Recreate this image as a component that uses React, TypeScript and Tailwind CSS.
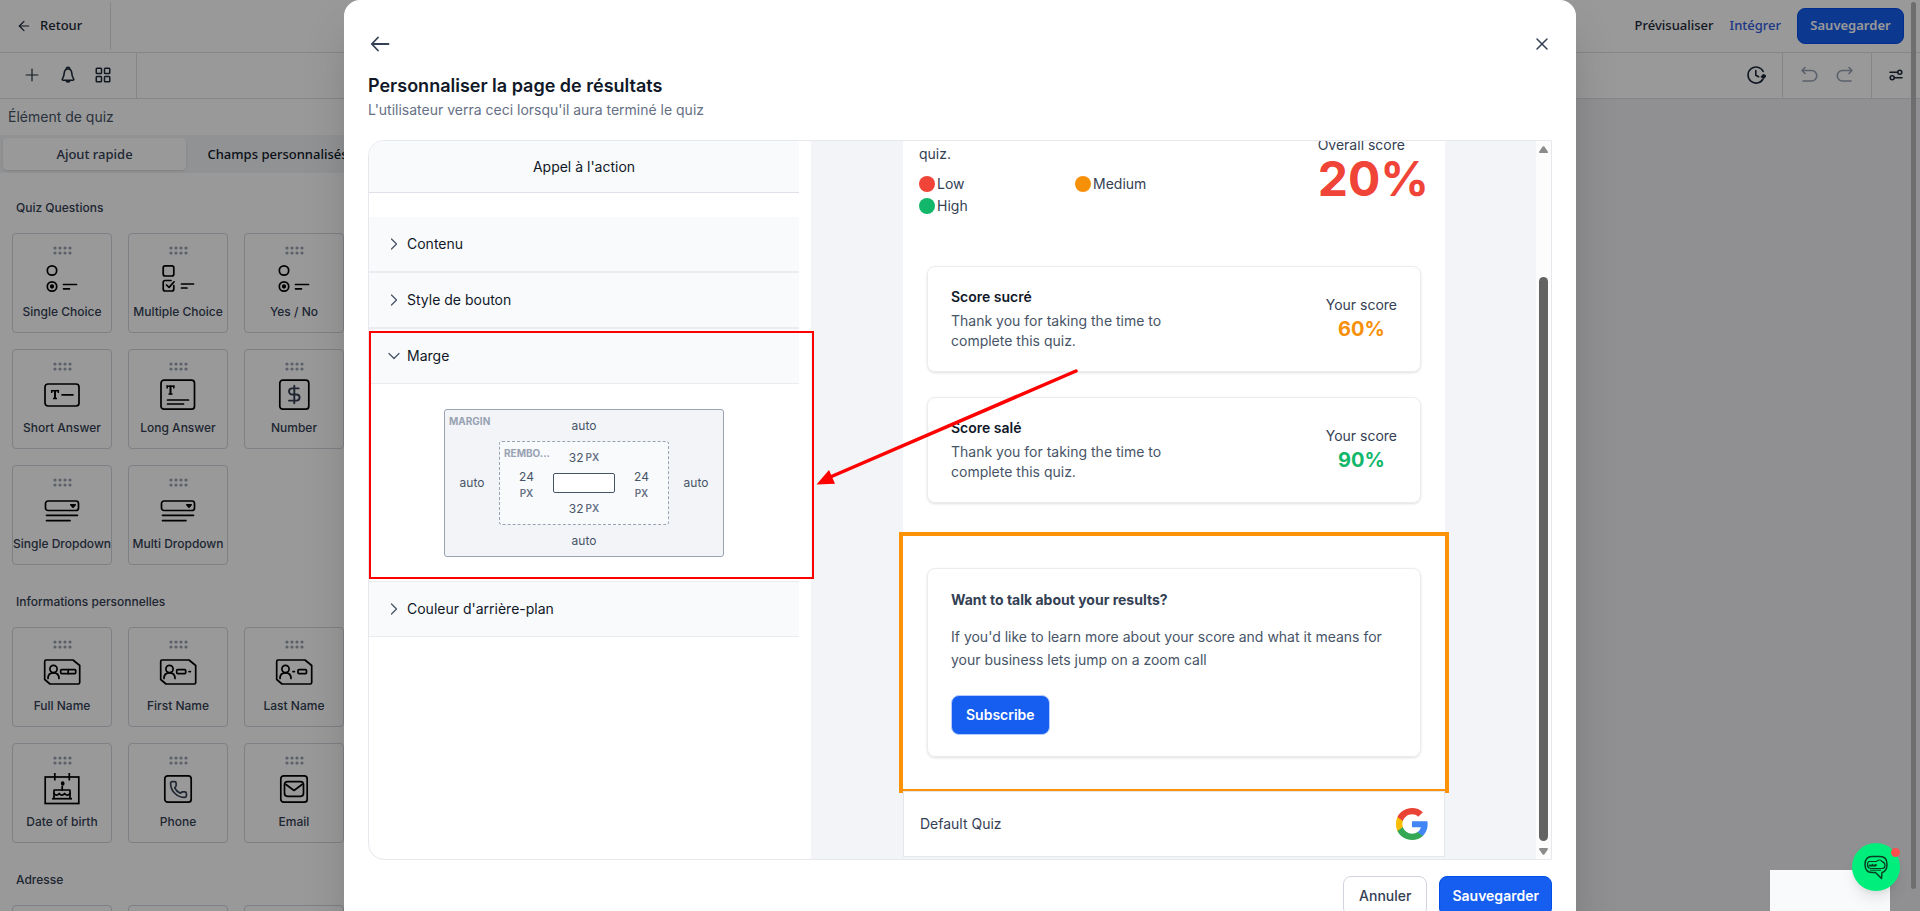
import React from "react";
import { ArrowLeft, ChevronDown, ChevronRight, DollarSign, LayoutGrid, Phone, Plus, X } from "lucide-react";

type Tile = { label: string; icon: React.ReactNode };

function Glyph({ children }: { children: React.ReactNode }) {
  return (
    <svg
      viewBox="0 0 40 36"
      className="mt-[7px] h-9 w-10 shrink-0"
      fill="none"
      stroke="#000"
      strokeWidth="1.7"
      strokeLinecap="round"
      strokeLinejoin="round"
      aria-hidden="true"
    >
      {children}
    </svg>
  );
}

function SlabT({ x, y }: { x: number; y: number }) {
  return (
    <g strokeWidth="1.5" strokeLinecap="butt">
      <line x1={x} y1={y + 0.7} x2={x + 8} y2={y + 0.7} />
      <line x1={x + 0.7} y1={y} x2={x + 0.7} y2={y + 3} />
      <line x1={x + 7.3} y1={y} x2={x + 7.3} y2={y + 3} />
      <line x1={x + 4} y1={y} x2={x + 4} y2={y + 9} strokeWidth="2" />
      <line x1={x + 2} y1={y + 8.5} x2={x + 6} y2={y + 8.5} />
    </g>
  );
}

const radioIcon = (
  <Glyph>
    <circle cx="10" cy="8.5" r="4.7" />
    <circle cx="10" cy="24.5" r="4.7" />
    <circle cx="10" cy="24.5" r="1.3" fill="#000" />
    <path d="M21.5 22.5H34.5M21.5 26.8H27.5" />
  </Glyph>
);

const dropdownIcon = (
  <Glyph>
    <rect x="3.5" y="7" width="33" height="9.5" rx="2.5" />
    <path d="M28.8 10.8l2.2 2.4 2.2-2.4z" fill="#000" />
    <path d="M4.5 21.3H35.5M4.5 26.6H28" />
  </Glyph>
);

function IdCard({ children }: { children: React.ReactNode }) {
  return (
    <Glyph>
      <path d="M4 4H31L37.7 9.5V26.5Q37.7 28 36.2 28H8L2.7 23.5V5.5Q2.7 4 4 4Z" />
      <circle cx="11.5" cy="13" r="3.6" />
      <path d="M6 22.5c0-3.8 2-5.6 5.5-5.6s5.5 1.8 5.5 5.6" />
      {children}
    </Glyph>
  );
}

const questionTiles: Tile[] = [
  { label: "Single Choice", icon: radioIcon },
  {
    label: "Multiple Choice",
    icon: (
      <Glyph>
        <rect x="5.2" y="3.8" width="10.6" height="10.2" rx="2" />
        <path d="M15.8 23.5V27q0 2-2 2H7.2q-2 0-2-2V20.5q0-2 2-2H13" />
        <path d="M8.5 23l2.6 2.4 5-5.6" />
        <path d="M23.5 22H35.5M23.5 26H29" />
      </Glyph>
    ),
  },
  { label: "Yes / No", icon: radioIcon },
  {
    label: "Short Answer",
    icon: (
      <Glyph>
        <rect x="3" y="6" width="34" height="22" rx="3" />
        <SlabT x={9} y={12} />
        <path d="M20 16.8H31" />
      </Glyph>
    ),
  },
  {
    label: "Long Answer",
    icon: (
      <Glyph>
        <rect x="3" y="2.2" width="33.5" height="29" rx="3" />
        <SlabT x={8.5} y={7.5} />
        <path d="M9.5 22H30.5M9.5 26H25.5" />
      </Glyph>
    ),
  },
  {
    label: "Number",
    icon: (
      <Glyph>
        <rect x="5.8" y="2.2" width="29" height="29" rx="3" />
        <DollarSign x="9.8" y="6" width="21" height="21" strokeWidth="2.2" />
      </Glyph>
    ),
  },
  { label: "Single Dropdown", icon: dropdownIcon },
  { label: "Multi Dropdown", icon: dropdownIcon },
];

const personalTiles: Tile[] = [
  {
    label: "Full Name",
    icon: (
      <IdCard>
        <rect x="18.7" y="13.6" width="15" height="4" rx="1" />
        <path d="M26.2 13.6v4" />
      </IdCard>
    ),
  },
  {
    label: "First Name",
    icon: (
      <IdCard>
        <rect x="18.7" y="13.6" width="9" height="4" rx="1" />
        <path d="M31 15.6h1.4" />
      </IdCard>
    ),
  },
  {
    label: "Last Name",
    icon: (
      <IdCard>
        <path d="M19 15.6h1.4" />
        <rect x="24" y="13.6" width="8.5" height="4" rx="1" />
      </IdCard>
    ),
  },
  {
    label: "Date of birth",
    icon: (
      <Glyph>
        <g strokeLinejoin="miter" strokeLinecap="butt">
          <rect x="3.2" y="5" width="33.6" height="26.5" />
          <path d="M12.8 1v7.5M27.3 1v7.5" />
          <path d="M10 26.7H30" />
        </g>
        <path d="M12 26.5V18.5Q12 18 12.5 18H27.5Q28 18 28 18.5V26.5" />
        <path d="M12 21.5q2.6 3.2 5.2 0q2.7 3.2 5.4 0q2.7 3.2 5.4 0" />
        <path d="M20.2 14.5V18" />
        <ellipse cx="20.7" cy="11.6" rx="1" ry="1.4" fill="#000" />
      </Glyph>
    ),
  },
  {
    label: "Phone",
    icon: (
      <Glyph>
        <rect x="6.8" y="3.8" width="26.4" height="26.4" rx="3" />
        <Phone x="11" y="8" width="19" height="19" strokeWidth="2.1" />
      </Glyph>
    ),
  },
  {
    label: "Email",
    icon: (
      <Glyph>
        <rect x="6.8" y="3.8" width="26.4" height="26.4" rx="3" />
        <rect x="10.5" y="9.7" width="19" height="14.6" rx="3" />
        <path d="M12 12.5l8 6 8-6" />
      </Glyph>
    ),
  },
];

function DragDots() {
  return (
    <svg viewBox="0 0 19 9" className="h-[9px] w-[19px] shrink-0" fill="#98a0b0" aria-hidden="true">
      {[2, 7, 12, 17].map((x) => (
        <g key={x}>
          <circle cx={x} cy="2" r="1.6" />
          <circle cx={x} cy="7" r="1.6" />
        </g>
      ))}
    </svg>
  );
}

function TileSection({ title, tiles }: { title: string; tiles: Tile[] }) {
  return (
    <section className="flex flex-col gap-4">
      <h3 className="pl-1 text-xs leading-[18px] font-medium text-[#344054]">{title}</h3>
      <div className="grid grid-cols-[100px_100px_100px] gap-4">
        {tiles.map((t, i) => (
          <button
            key={i}
            className="flex h-[100px] flex-col items-center rounded border border-[#d0d5dd] pt-3 text-xs leading-[18px] font-medium whitespace-nowrap text-[#344054]"
          >
            <DragDots />
            {t.icon}
            <span className="mt-[5px]">{t.label}</span>
          </button>
        ))}
      </div>
    </section>
  );
}

function Sidebar() {
  return (
    <aside className="w-[372px] shrink-0 bg-white">
      <h2 className="px-2 py-[7px] text-sm leading-[22px] text-[#475467]">Élément de quiz</h2>
      <div className="grid grid-cols-2 bg-[#f2f4f7] p-[3px] font-['Noto_Sans',sans-serif] text-[13px] font-medium">
        <button className="h-8 rounded bg-white pt-0.5 text-[#344054] shadow-sm">Ajout rapide</button>
        <button className="h-8 pt-0.5 text-[#101828]">Champs personnalisés</button>
      </div>
      <div className="flex flex-col gap-7 px-3 pt-[26px]">
        <TileSection title="Quiz Questions" tiles={questionTiles} />
        <TileSection title="Informations personnelles" tiles={personalTiles} />
        <TileSection
          title="Adresse"
          tiles={[
            { label: "", icon: null },
            { label: "", icon: null },
            { label: "", icon: null },
          ]}
        />
      </div>
    </aside>
  );
}

function TopBars() {
  return (
    <header className="text-[#1d2939]">
      <div className="flex h-[53px] items-center border-b border-[#dcdfe5] font-['Noto_Sans',sans-serif] text-[13px] font-medium">
        <button className="flex h-12 w-[111px] items-center gap-2 border-r border-[#dcdfe5] pl-4">
          <ArrowLeft className="size-4" strokeWidth={1.8} />
          Retour
        </button>
        <nav className="ml-auto flex items-center gap-4 pr-4">
          <a href="#preview">Prévisualiser</a>
          <a href="#embed" className="text-[#2f5be0]">Intégrer</a>
          <button className="h-9 w-[107px] rounded-lg border border-[#004eeb] bg-[#155eef] font-semibold text-white">
            Sauvegarder
          </button>
        </nav>
      </div>
      <div className="flex h-[46px] items-stretch border-b border-[#dcdfe5] pb-0.5">
        <div className="-mb-0.5 flex w-[137px] items-center gap-4 border-r border-[#dcdfe5] pb-0.5 pl-[22px]">
          <button aria-label="Ajouter">
            <Plus className="size-5" strokeWidth={1.4} absoluteStrokeWidth />
          </button>
          <button aria-label="Notifications">
            <svg viewBox="0 0 20 20" className="size-5" fill="none" stroke="currentColor" strokeWidth="1.6" strokeLinejoin="round" aria-hidden="true">
              <path d="M8.300 4.300C8.300 2.900 9 2.300 10 2.300s1.700.6 1.700 2" />
              <path d="M10 4c-2.400 0-3.600 1.800-3.800 4.200-.2 2.800-.7 4-1.700 5.400-.6.9-.2 1.600.8 1.600h9.400c1 0 1.400-.7.8-1.600-1-1.400-1.500-2.600-1.700-5.400C13.600 5.800 12.400 4 10 4z" />
              <path d="M8.200 15.200c0 1.200.7 1.700 1.800 1.700s1.800-.5 1.800-1.700" />
            </svg>
          </button>
          <button aria-label="Widgets">
            <LayoutGrid className="size-[18px]" strokeWidth={2} />
          </button>
        </div>
        <div className="-mb-0.5 ml-auto flex items-stretch">
          <button aria-label="Historique" className="px-4 pb-0.5">
            <svg viewBox="0 0 20 20" className="size-5" fill="none" stroke="currentColor" strokeWidth="1.6" strokeLinecap="round" strokeLinejoin="round" aria-hidden="true">
              <path d="M17.200 6.500A8 8 0 1 0 17 14" />
              <path d="M9.800 5.500V10.200l2.800 1.600" />
              <path d="M15.500 11.800l2-2 2 1.200-1.700 2z" fill="currentColor" />
            </svg>
          </button>
          <div className="flex items-center gap-4 border-x border-[#dcdfe5] px-4 pb-0.5 text-[#98a2b3]">
            <button aria-label="Annuler la modification">
              <svg viewBox="0 0 20 20" className="size-5" fill="none" stroke="currentColor" strokeWidth="1.6" strokeLinecap="round" strokeLinejoin="round" aria-hidden="true">
                <path d="M6 2.500L3 5.500l3 3M3 5.500h9.500a5.200 5.200 0 0 1 0 10.500H4" />
              </svg>
            </button>
            <button aria-label="Rétablir la modification">
              <svg viewBox="0 0 20 20" className="size-5" fill="none" stroke="currentColor" strokeWidth="1.6" strokeLinecap="round" strokeLinejoin="round" aria-hidden="true">
                <path d="M14 2.500l3 3-3 3M17 5.500H7.500a5.200 5.200 0 0 0 0 10.500H16" />
              </svg>
            </button>
          </div>
          <button aria-label="Réglages" className="px-4 pb-0.5">
            <svg viewBox="0 0 16 16" className="size-4" fill="none" stroke="currentColor" strokeWidth="1.5" strokeLinecap="round" aria-hidden="true">
              <path d="M2 5.200h7.500M6.500 10.800H14" />
              <circle cx="11.800" cy="5.200" r="2" />
              <circle cx="4.200" cy="10.800" r="2" />
            </svg>
          </button>
        </div>
      </div>
    </header>
  );
}

function AccordionItem({ title, open, children }: { title: string; open?: boolean; children?: React.ReactNode }) {
  const Icon = open ? ChevronDown : ChevronRight;
  return (
    <div className="relative border-t border-[#eaecf0] first:border-t-0">
      <button
        aria-expanded={!!open}
        className="flex h-[55px] w-full items-center gap-[3px] border-b border-[#eaecf0] bg-[#f9fafb] pl-[15px] text-sm text-[#101828]"
      >
        <Icon className="size-5 text-[#475467]" strokeWidth={1.5} />
        {title}
      </button>
      {children}
    </div>
  );
}

function PxValue({ value, stacked }: { value: number; stacked?: boolean }) {
  return (
    <span
      className={
        stacked
          ? "flex flex-col items-center leading-4"
          : "col-start-2 flex items-center justify-center gap-0.5"
      }
    >
      {value}
      <small className="text-[10px] font-semibold text-[#667085]">PX</small>
    </span>
  );
}

function BoxModel() {
  return (
    <div className="relative grid grid-cols-[54px_170px_54px] grid-rows-[31px_84px_31px] place-items-center rounded-[3px] border border-[#98a2b3] bg-[#f2f4f7] text-xs text-[#475467]">
      <span className="absolute top-[3px] left-1 text-[10px] leading-4 font-bold text-[#98a2b3]">MARGIN</span>
      <span className="col-start-2">auto</span>
      <span className="row-start-2">auto</span>
      <div className="relative col-start-2 row-start-2 grid h-full w-full grid-cols-[1fr_62px_1fr] grid-rows-[1fr_20px_1fr] rounded-[3px] border border-dashed border-[#98a2b3] bg-[#f9fafb]">
        <span className="absolute top-[3px] left-1 text-[10px] leading-4 font-bold text-[#98a2b3]">REMBO...</span>
        <PxValue value={32} />
        <div className="row-start-2 flex h-6 items-center justify-center">
          <PxValue value={24} stacked />
        </div>
        <div className="col-start-2 row-start-2 rounded-xs border border-[#475467] bg-white" />
        <div className="row-start-2 flex h-6 items-center justify-center">
          <PxValue value={24} stacked />
        </div>
        <PxValue value={32} />
      </div>
      <span className="col-start-3 row-start-2">auto</span>
      <span className="col-start-2">auto</span>
    </div>
  );
}

function SettingsPane() {
  return (
    <div className="w-[442px] shrink-0 pr-3">
      <div className="flex h-[52px] items-center justify-center border-b border-[#dfe1e8] bg-[#f9fafb] text-sm text-[#101828]">
        Appel à l'action
      </div>
      <div className="mt-6">
        <AccordionItem title="Contenu" />
        <AccordionItem title="Style de bouton" />
        <AccordionItem title="Marge" open>
          <div className="flex h-[197px] justify-center pt-[25px]">
            <div>
              <BoxModel />
            </div>
          </div>
          <div className="pointer-events-none absolute top-0.5 -right-[15px] bottom-0.5 left-0 border-2 border-[#ff0000]" />
        </AccordionItem>
        <AccordionItem title="Couleur d'arrière-plan" />
      </div>
    </div>
  );
}

function ScoreCard({ title, percent, color }: { title: string; percent: string; color: string }) {
  return (
    <article className="flex items-center justify-between rounded-lg border border-[#eaecf0] px-[23px] py-5 text-sm leading-5 shadow-sm">
      <div className="w-[230px]">
        <h4 className="font-semibold text-[#101828]">{title}</h4>
        <p className="mt-1 text-[#475467]">Thank you for taking the time to complete this quiz.</p>
      </div>
      <div className="text-center text-[#344054]">
        <p>Your score</p>
        <p className="text-xl leading-7 font-bold" style={{ color }}>{percent}</p>
      </div>
    </article>
  );
}

const levels = [
  { label: "Low", color: "#f04438" },
  { label: "Medium", color: "#f79009" },
  { label: "High", color: "#12b76a" },
];

function GoogleMark() {
  return (
    <svg viewBox="0 0 48 48" className="size-8" aria-label="Google" role="img">
      <path fill="#4285F4" d="M47.500 24.550c0-1.630-.15-3.200-.42-4.700H24v9.020h13.200c-.57 3-2.300 5.550-4.900 7.260v6h7.900c4.600-4.260 7.300-10.500 7.300-17.580z" />
      <path fill="#34A853" d="M24 48c6.600 0 12.150-2.200 16.200-5.900l-7.900-6c-2.200 1.470-5 2.340-8.300 2.340-6.370 0-11.770-4.300-13.700-10.100H2.150v6.200C6.170 42.550 14.430 48 24 48z" />
      <path fill="#FBBC05" d="M10.300 28.340A14.300 14.300 0 0 1 9.550 24c0-1.500.27-2.960.75-4.340v-6.200H2.150A24 24 0 0 0 0 24c0 3.800.8 7.400 2.150 10.540z" />
      <path fill="#EA4335" d="M24 9.550c3.600 0 6.800 1.230 9.330 3.650l7-7C36.130 2.250 30.600 0 24 0 14.430 0 6.170 5.450 2.150 13.460l8.150 6.200c1.930-5.800 7.330-10.110 13.700-10.110z" />
    </svg>
  );
}

function Preview() {
  return (
    <div className="flex min-w-0 flex-1 flex-col justify-end overflow-hidden bg-[#f2f4f7] pr-[91px] pb-0.5 pl-[92px]">
      <div className="shrink-0 bg-white">
        <div className="flex items-end justify-between px-4 pb-[49px] text-sm leading-[22px] text-[#344054]">
          <div>
            <p>quiz.</p>
            <ul className="mt-2 grid grid-cols-[156px_156px]">
              {levels.map((l) => (
                <li key={l.label} className="flex items-center gap-0.5">
                  <span className="size-4 rounded-full" style={{ backgroundColor: l.color }} />
                  {l.label}
                </li>
              ))}
            </ul>
          </div>
          <div className="pb-3.5">
            <p className="leading-5">Overall score</p>
            <p className="text-5xl leading-12 font-bold text-[#f04438]">20%</p>
          </div>
        </div>
        <div className="flex flex-col gap-[25px] px-6 pb-[33px]">
          <ScoreCard title="Score sucré" percent="60%" color="#f79009" />
          <ScoreCard title="Score salé" percent="90%" color="#12b76a" />
        </div>
        <section className="px-6 py-8 outline-4 outline-[#fb9207]">
          <div className="rounded-lg border border-[#eaecf0] px-[23px] pt-5 pb-[21px] text-sm shadow-sm">
            <h4 className="leading-[22px] font-bold text-[#344054]">Want to talk about your results?</h4>
            <p className="mt-3.5 leading-[23px] text-[#475467]">
              If you'd like to learn more about your score and what it means for your business lets jump on a zoom call
            </p>
            <button className="mt-6 block h-10 rounded-lg border border-[#b2ccff] bg-[#155eef] px-3.5 font-semibold text-white">
              Subscribe
            </button>
          </div>
        </section>
        <footer className="relative mt-0.5 flex h-[66px] items-center justify-between border border-[#e4e7ec] bg-white px-4 text-sm text-[#344054]">
          Default Quiz
          <GoogleMark />
        </footer>
      </div>
    </div>
  );
}

function ScrollTrack() {
  return (
    <div className="flex w-[15px] shrink-0 flex-col items-center bg-[#fcfcfc] py-1" aria-hidden="true">
      <svg viewBox="0 0 9 7" className="mt-px h-[7px] w-[9px]" fill="#8b8b8b">
        <path d="M3.700.6q.8-.9 1.600 0L8.800 5.500Q9.200 7 8 7H1Q-.2 7 .2 5.500z" />
      </svg>
      <div className="mt-[124px] mb-[7px] w-[9px] flex-1 rounded-full bg-[#636363]" />
      <svg viewBox="0 0 9 7" className="h-[7px] w-[9px]" fill="#8b8b8b">
        <path d="M3.700 6.400q.8.900 1.600 0L8.800 1.500Q9.200 0 8 0H1Q-.2 0 .2 1.500z" />
      </svg>
    </div>
  );
}

function ResultsDialog() {
  return (
    <div role="dialog" aria-label="Personnaliser la page de résultats" className="w-full max-w-[1232px] self-start rounded-2xl bg-white px-6 pt-8 pb-6 shadow-2xl">
      <div className="flex h-6 items-center justify-between text-[#344054]">
        <button aria-label="Retour">
          <svg viewBox="0 0 24 24" className="size-6" fill="none" stroke="currentColor" strokeWidth="1.800" strokeLinecap="round" strokeLinejoin="round" aria-hidden="true">
            <path d="M3.800 12H20.500M10 5.500L3.800 12l6.200 6.500" />
          </svg>
        </button>
        <button aria-label="Fermer">
          <X className="size-5" strokeWidth={1.8} />
        </button>
      </div>
      <h1 className="mt-4 text-lg leading-7 font-semibold text-[#101828]">Personnaliser la page de résultats</h1>
      <p className="text-sm leading-5 text-[#667085]">L'utilisateur verra ceci lorsqu'il aura terminé le quiz</p>
      <div className="relative mt-5">
        <div className="flex h-[79vh] overflow-hidden rounded-l-2xl border border-[#e6e8ed]">
          <SettingsPane />
          <Preview />
          <ScrollTrack />
        </div>
        <svg viewBox="0 0 268 120" className="pointer-events-none absolute top-[228px] left-[446px] h-[120px] w-[268px]" aria-hidden="true">
          <path d="M262 3L14 110" stroke="#ff0000" strokeWidth="3.500" strokeLinecap="round" />
          <path d="M2.500 116.500L15 102L21 115.700Z" fill="#ff0000" />
        </svg>
      </div>
      <div className="mt-4 flex justify-end gap-3 text-sm font-semibold">
        <button className="h-10 rounded-lg border border-[#d0d5dd] px-[15px] font-medium text-[#344054]">Annuler</button>
        <button className="h-10 rounded-lg border border-[#004eeb] bg-[#155eef] px-3 text-white">Sauvegarder</button>
      </div>
    </div>
  );
}

function ChatWidget() {
  return (
    <div className="absolute right-5 bottom-5">
      <button aria-label="Ouvrir le chat" className="flex size-12 items-center justify-center rounded-full bg-[#00ee7b] shadow-lg">
        <svg viewBox="0 0 26 26" className="size-[26px]" fill="none" stroke="#063f22" strokeWidth="1.500" strokeLinejoin="round" aria-hidden="true">
          <path d="M9 2.500H17Q24 2.500 24 10T19 18.500L18.500 24.500L12.500 18.500H9Q2 18.500 2 10.500T9 2.500Z" />
          <path d="M6 7.500H13.500Q14.500 6 16.500 6T19 7.700Q22 8.500 22 11.500T19 14.500H8Q5 14.500 4.500 12H13M6 7.500Q4 8.500 4.500 12M6.500 10.500l1.500 1.500 1.500-1.500 1.500 1.500 1.500-1.500 1.500 1" strokeWidth="1.200" />
          <path d="M7 16.200H18" strokeWidth="1" />
        </svg>
      </button>
      <span className="absolute top-[5px] right-0 size-[9px] rounded-full bg-[#ff4d4d]" />
    </div>
  );
}

export default function App() {
  return (
    <div className="relative h-screen overflow-hidden bg-white font-['Inter',sans-serif]">
      <TopBars />
      <div className="flex">
        <Sidebar />
        <main className="flex-1 bg-[#f0f0f3]" />
      </div>
      <div className="absolute inset-0 flex justify-center overflow-hidden bg-black/40">
        <ResultsDialog />
      </div>
      <div className="absolute top-0.5 right-1 bottom-[22px] w-[5px] rounded-full bg-[#6e6e6f]" aria-hidden="true" />
      <div className="absolute right-[30px] bottom-0 h-[41px] w-[120px] bg-[#f9fafb]" />
      <ChatWidget />
    </div>
  );
}
